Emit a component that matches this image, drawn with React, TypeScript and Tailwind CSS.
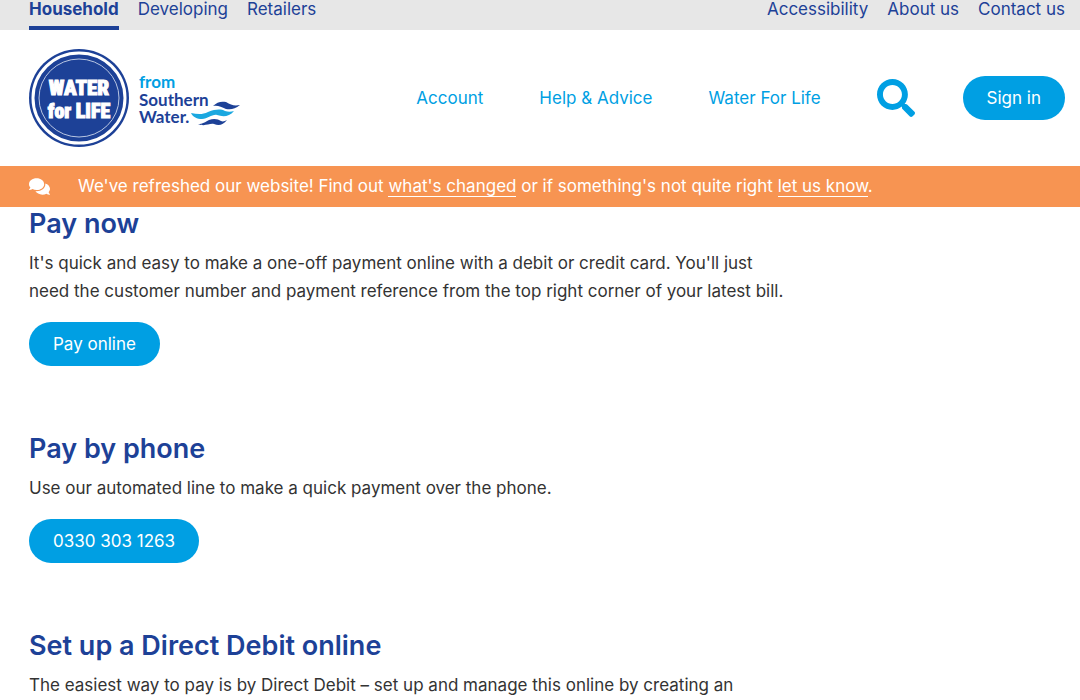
import React from "react";
import { FaComments, FaSearch } from "react-icons/fa";

const AUDIENCES = ["Household", "Developing", "Retailers"];

const UTILITY_LINKS = ["Accessibility", "About us", "Contact us"];

const MAIN_LINKS = ["Account", "Help & Advice", "Water For Life"];

const SECTIONS = [
  {
    title: "Pay now",
    text: "It's quick and easy to make a one-off payment online with a debit or credit card. You'll just need the customer number and payment reference from the top right corner of your latest bill.",
    action: "Pay online",
    href: "#pay-online",
  },
  {
    title: "Pay by phone",
    text: "Use our automated line to make a quick payment over the phone.",
    action: "0330 303 1263",
    href: "tel:03303031263",
  },
  {
    title: "Set up a Direct Debit online",
    text: "The easiest way to pay is by Direct Debit – set up and manage this online by creating an",
  },
];

const Logo = () => (
  <svg
    width="212"
    height="98"
    viewBox="0 0 212 98"
    role="img"
    aria-label="Water for Life from Southern Water"
  >
    <ellipse cx="50" cy="49" rx="50" ry="49" fill="#1d4197" />
    <ellipse cx="50" cy="49" rx="46" ry="45" fill="none" stroke="#fff" strokeWidth="3" />
    <ellipse cx="50" cy="49" rx="40" ry="39" fill="none" stroke="#b9c6e2" strokeWidth="1" />
    <g
      fill="#fff"
      stroke="#fff"
      strokeWidth="1"
      textAnchor="middle"
      className="font-['Roboto_Condensed','Open_Sans_Condensed',Roboto,sans-serif] font-black"
    >
      <text x="50" y="46" fontSize="21">WATER</text>
      <text x="50" y="69" fontSize="20">for LIFE</text>
    </g>
    <g className="font-[Lato,sans-serif] font-bold" fontSize="17">
      <text x="110" y="39" fill="#009fe3">from</text>
      <text x="110" y="57" fill="#1d4197">Southern</text>
      <text x="110" y="74" fill="#1d4197">Water.</text>
    </g>
    <path
      d="M184 57c4-4 8-5 13-4 5 3 8 4 14 3-5 4-9 5-14 4-5-2-8-4-13-3z"
      fill="#1d4197"
    />
    <path
      d="M162 64c6 1 11 2 17-1 8-3 13-3 17-1 3 1 6 1 9 0-5 6-11 6-17 4-5-1-9 4-15 4-5 0-9-2-11-6z"
      fill="#1ba8e0"
    />
    <path
      d="M169 75c5 0 7-2 11-4 5-2 9-1 12 1 2 1 4 0 6-1-4 5-8 6-13 4-5-1-9 3-16 0z"
      fill="#1d4197"
    />
  </svg>
);

const App = () => {
  return (
    <div className="min-h-screen bg-white font-[Inter,sans-serif] text-[17px] leading-7 text-[#333333]">
      <div className="flex justify-between bg-[#e7e7e7] pr-[15px] pl-[29px] text-[#1d4197]">
        <nav aria-label="Audience" className="flex gap-[19px]">
          {AUDIENCES.map((item, index) => (
            <a
              key={item}
              href="#"
              className={
                index === 0
                  ? "border-b-4 border-[#1d4197] pb-2 leading-[18px] font-bold"
                  : "border-b-4 border-transparent pb-2 leading-[18px]"
              }
            >
              {item}
            </a>
          ))}
        </nav>
        <nav aria-label="Help links" className="flex gap-[19px] leading-[18px]">
          {UTILITY_LINKS.map((item) => (
            <a key={item} href="#">
              {item}
            </a>
          ))}
        </nav>
      </div>
      <header className="flex items-center justify-between py-[19px] pr-[15px] pl-[29px]">
        <a href="#">
          <Logo />
        </a>
        <div className="flex items-center">
          <nav aria-label="Main" className="flex gap-14 text-[#009fe3]">
            {MAIN_LINKS.map((item) => (
              <a key={item} href="#">
                {item}
              </a>
            ))}
          </nav>
          <button type="button" aria-label="Search" className="ml-14 text-[#009fe3]">
            <FaSearch size={38} />
          </button>
          <a
            href="#sign-in"
            className="ml-12 rounded-full bg-[#009fe3] px-6 py-2 text-white"
          >
            Sign in
          </a>
        </div>
      </header>
      <div className="flex items-center bg-[#f79452] py-[6px] pr-[15px] pl-[29px] leading-[29px] text-white">
        <FaComments size={21} className="mr-7" />
        <p>
          We've refreshed our website! Find out{" "}
          <a href="#" className="border-b border-white">
            what's changed
          </a>{" "}
          or if something's not quite right{" "}
          <a href="#" className="border-b border-white">
            let us know
          </a>
          .
        </p>
      </div>
      <main className="flex flex-col gap-[66px] pr-[15px] pl-[29px]">
        {SECTIONS.map((section) => (
          <section key={section.title}>
            <h2 className="mb-2 text-[27px] leading-[34px] font-semibold text-[#1d4197]">
              {section.title}
            </h2>
            <p className="max-w-[762px]">{section.text}</p>
            {section.action && (
              <a
                href={section.href}
                className="mt-[17px] inline-block rounded-full bg-[#009fe3] px-6 py-2 text-white"
              >
                {section.action}
              </a>
            )}
          </section>
        ))}
      </main>
    </div>
  );
};

export default App;
